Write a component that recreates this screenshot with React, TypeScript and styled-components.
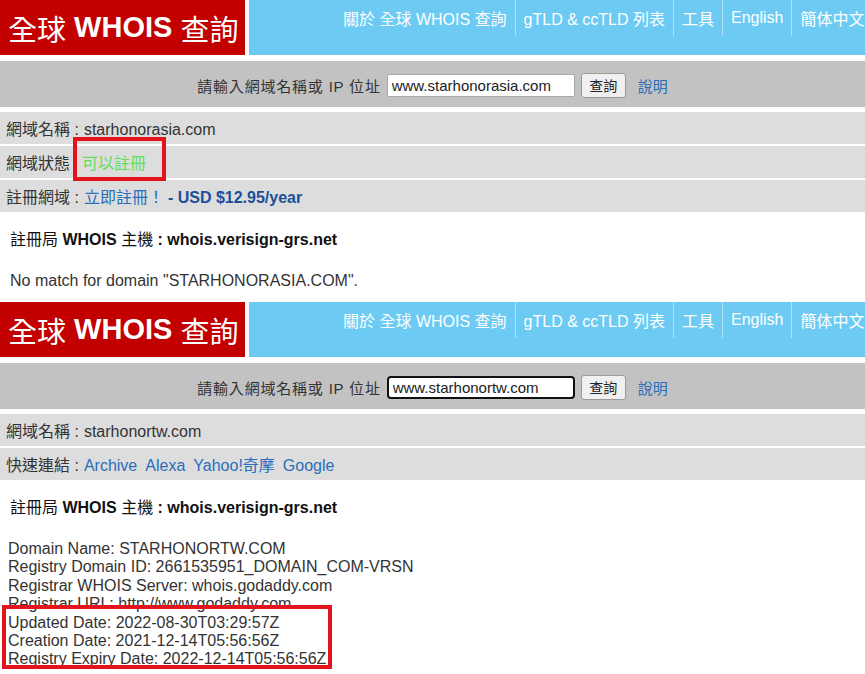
import * as React from 'react';
import styled, { createGlobalStyle } from 'styled-components';

const GlobalStyle = createGlobalStyle`
  html, body {
    margin: 0;
    padding: 0;
    background: #ffffff;
  }
  body {
    font-family: 'Liberation Sans', Arial, 'Noto Sans CJK TC', sans-serif;
    color: #333333;
    overflow: hidden;
  }
`;

const Page = styled.section`
  width: 865px;
  overflow: hidden;
`;

const Header = styled.header`
  display: flex;
  height: 55px;
  gap: 4px;
`;

const Logo = styled.div`
  flex: 0 0 245px;
  background: #c20000;
  color: #ffffff;
  font-size: 29px;
  font-weight: bold;
  display: flex;
  align-items: center;
  padding-left: 8px;
  box-sizing: border-box;
  white-space: nowrap;
`;

const Cjk = styled.span`
  font-weight: normal;
`;

const Nav = styled.nav`
  flex: 1;
  background: #6dcbf3;
  display: flex;
  align-items: flex-start;
  padding-left: 86px;
  overflow: hidden;
  white-space: nowrap;
`;

const NavItem = styled.a<{ $first?: boolean }>`
  display: flex;
  align-items: center;
  height: 36px;
  padding: 0 8px;
  color: #ffffff;
  font-size: 16px;
  text-decoration: none;
  border-left: ${(p) => (p.$first ? 'none' : '1px solid rgba(255, 255, 255, 0.45)')};
`;

const SearchBar = styled.form`
  margin-top: 6px;
  height: 46px;
  background: #c2c2c2;
  display: flex;
  align-items: center;
  justify-content: center;
  gap: 6px;
  padding-top: 2px;
  box-sizing: border-box;
  font-size: 15px;
  color: #333;
`;

const SearchLabel = styled.span`
  letter-spacing: 0.8px;
`;

const DomainInput = styled.input<{ $focused?: boolean }>`
  width: 188px;
  height: 23px;
  box-sizing: border-box;
  padding: 0 4px;
  font-family: 'Liberation Sans', Arial, sans-serif;
  font-size: 15px;
  color: #222;
  background: #fff;
  border: ${(p) => (p.$focused ? '2px solid #111' : '1px solid #a8a8a8')};
  border-radius: ${(p) => (p.$focused ? '4px' : '2px')};
  outline: none;
`;

const SearchButton = styled.button`
  height: 25px;
  width: 45px;
  padding: 0;
  font-family: 'Liberation Sans', 'Noto Sans CJK TC', sans-serif;
  font-size: 14px;
  color: #222;
  background: #f0f0f0;
  border: 1px solid #9a9a9a;
  border-radius: 3px;
`;

const HelpLink = styled.a`
  margin-left: 6px;
  color: #2a6ebb;
  text-decoration: none;
`;

const InfoList = styled.div`
  margin-top: 5px;
  display: flex;
  flex-direction: column;
  gap: 2px;
`;

const InfoRow = styled.div`
  height: 32px;
  box-sizing: border-box;
  padding: 3px 0 0 6px;
  background: #dddddd;
  display: flex;
  align-items: center;
  font-size: 16px;
  line-height: 18px;
  color: #333;
  white-space: nowrap;
`;

const Label = styled.span`
  margin-right: 5px;
`;

const Available = styled.span`
  position: relative;
  margin-left: 7px;
  color: #5ede5e;
`;

const Highlight = styled.span<{ $t: number; $r: number; $b: number; $l: number }>`
  position: absolute;
  top: ${(p) => p.$t}px;
  right: ${(p) => p.$r}px;
  bottom: ${(p) => p.$b}px;
  left: ${(p) => p.$l}px;
  border: 4px solid #e3141b;
  pointer-events: none;
`;

const Link = styled.a<{ $bold?: boolean; $gap?: number }>`
  color: ${(p) => (p.$bold ? '#1b4f9a' : '#2a6ebb')};
  font-weight: ${(p) => (p.$bold ? 'bold' : 'normal')};
  text-decoration: none;
  margin-right: ${(p) => (p.$gap ?? 8)}px;
`;

const Body = styled.div`
  padding: 19px 10px 12px;
  font-size: 16px;
  line-height: 18px;
  color: #333;
`;

const ServerLine = styled.p`
  margin: 0 0 23px;
  font-weight: bold;
  color: #111;
`;

const Plain = styled.p`
  margin: 0;
`;

const WhoisText = styled.div`
  margin-left: -2px;
  line-height: 18.4px;
`;

const Marked = styled.div`
  position: relative;
  display: inline-block;
`;

const NAV = ['關於 全球 WHOIS 查詢', 'gTLD & ccTLD 列表', '工具', 'English', '簡体中文'];

const TopBar = () => (
  <Header>
    <Logo>
      <Cjk>全球</Cjk>&nbsp;WHOIS&nbsp;<Cjk>查詢</Cjk>
    </Logo>
    <Nav>
      {NAV.map((n, i) => (
        <NavItem key={n} $first={i === 0}>
          {n}
        </NavItem>
      ))}
    </Nav>
  </Header>
);

const Search = ({ value, focused }: { value: string; focused?: boolean }) => (
  <SearchBar onSubmit={(e) => e.preventDefault()}>
    <SearchLabel>請輸入網域名稱或 IP 位址</SearchLabel>
    <DomainInput defaultValue={value} $focused={focused} />
    <SearchButton type="button">查詢</SearchButton>
    <HelpLink>說明</HelpLink>
  </SearchBar>
);

const Server = () => (
  <ServerLine>
    <Cjk>註冊局</Cjk> WHOIS <Cjk>主機</Cjk> : whois.verisign-grs.net
  </ServerLine>
);

export default function App() {
  return (
    <>
      <GlobalStyle />
      <Page>
        <TopBar />
        <Search value="www.starhonorasia.com" />
        <InfoList>
          <InfoRow>
            <Label>網域名稱 :</Label>starhonorasia.com
          </InfoRow>
          <InfoRow>
            <Label>網域狀態</Label>
            <Available>
              可以註冊
              <Highlight $t={-18} $r={-20} $b={-8} $l={-9} />
            </Available>
          </InfoRow>
          <InfoRow>
            <Label>註冊網域 :</Label>
            <Link $gap={4}>立即註冊！</Link>
            <Link $bold $gap={0}>- USD $12.95/year</Link>
          </InfoRow>
        </InfoList>
        <Body>
          <Server />
          <Plain>No match for domain "STARHONORASIA.COM".</Plain>
        </Body>
      </Page>
      <Page>
        <TopBar />
        <Search value="www.starhonortw.com" focused />
        <InfoList>
          <InfoRow>
            <Label>網域名稱 :</Label>starhonortw.com
          </InfoRow>
          <InfoRow>
            <Label>快速連結 :</Label>
            <Link>Archive</Link>
            <Link>Alexa</Link>
            <Link>Yahoo!奇摩</Link>
            <Link>Google</Link>
          </InfoRow>
        </InfoList>
        <Body>
          <Server />
          <WhoisText>
            <div>Domain Name: STARHONORTW.COM</div>
            <div>Registry Domain ID: 2661535951_DOMAIN_COM-VRSN</div>
            <div>Registrar WHOIS Server: whois.godaddy.com</div>
            <div>Registrar URL: http://www.godaddy.com</div>
            <Marked>
              <div>Updated Date: 2022-08-30T03:29:57Z</div>
              <div>Creation Date: 2021-12-14T05:56:56Z</div>
              <div>Registry Expiry Date: 2022-12-14T05:56:56Z</div>
              <Highlight $t={-9} $r={-6} $b={0} $l={-6} />
            </Marked>
          </WhoisText>
        </Body>
      </Page>
    </>
  );
}
